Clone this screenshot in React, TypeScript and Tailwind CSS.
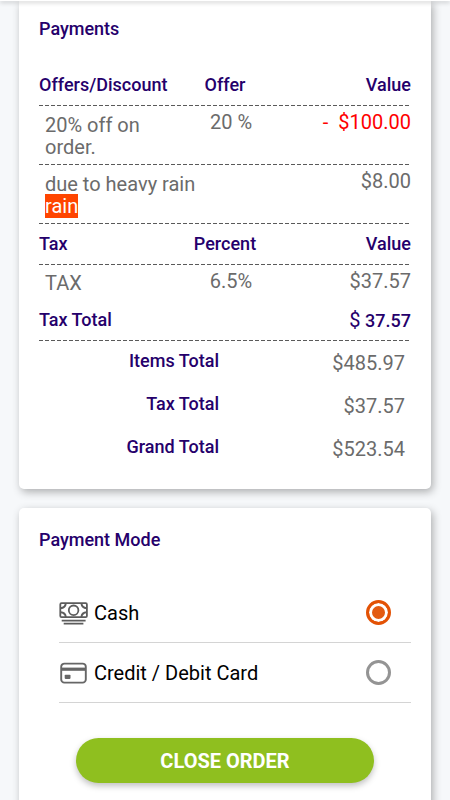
import { useState } from 'react'

const dashed = 'bg-[repeating-linear-gradient(to_right,#5a5a5a_0_4px,transparent_4px_6px)] bg-[length:100%_1px] bg-bottom bg-no-repeat'
const card = 'mx-[19px] rounded-[5px] bg-white px-5 shadow-[2px_3px_9px_rgba(0,0,0,0.3)]'
const heading = 'text-lg leading-6 font-medium text-[#25006b]'

function HeadRow({ cells }: { cells: string[] }) {
  return (
    <tr className={dashed}>
      <th className="w-1/3 pt-2 pb-[9px] text-left font-medium">{cells[0]}</th>
      <th className="w-1/3 pt-2 pb-[9px] text-center font-medium">{cells[1]}</th>
      <th className="w-1/3 pt-2 pb-[9px] text-right font-medium">{cells[2]}</th>
    </tr>
  )
}

function CashIcon() {
  return (
    <svg viewBox="0 0 30 26" className="h-[26px] w-[30px]" fill="none" stroke="#5c5c5c" aria-hidden="true">
      <rect x="1.3" y="3.2" width="26.6" height="14" rx="1.2" strokeWidth="1.8" />
      <circle cx="14.6" cy="10.3" r="4.8" strokeWidth="1.8" />
      <path d="M1.5 8.2Q6.4 7.8 6.8 3.4M27.7 8.2Q22.8 7.8 22.4 3.4M1.5 12.3Q6.4 12.7 6.8 17M27.7 12.3Q22.8 12.7 22.4 17" strokeWidth="1.9" />
      <path d="M2.7 20.6H26.6M4.7 23.6H24.4" strokeWidth="1.8" />
    </svg>
  )
}

function CardIcon() {
  return (
    <svg viewBox="0 0 30 26" className="h-[26px] w-[30px]" fill="none" stroke="#666" aria-hidden="true">
      <rect x="2.2" y="3.6" width="24.6" height="19" rx="3.2" strokeWidth="1.9" />
      <path d="M3 9.2H26.5" strokeWidth="3.2" />
      <rect x="5.7" y="14.7" width="5.8" height="4.2" rx="0.8" fill="#666" stroke="none" />
    </svg>
  )
}

const modes = [
  { id: 'cash', label: 'Cash', Icon: CashIcon },
  { id: 'card', label: 'Credit / Debit Card', Icon: CardIcon },
]

const totals = [
  ['Items Total', '$485.97'],
  ['Tax Total', '$37.57'],
  ['Grand Total', '$523.54'],
]

export default function App() {
  const [mode, setMode] = useState('cash')

  return (
    <div className="min-h-screen bg-[#f6f8fa] font-[Roboto,sans-serif] text-xl leading-[22px] text-[#6b6b6b]">
      <header className="relative h-px bg-white shadow-[0_1px_4px_rgba(0,0,0,0.5)]" />
      <main>
        <section className={`${card} rounded-t-none pt-4 pb-[19px]`}>
          <h2 className={heading}>Payments</h2>
          <table className="mt-6 w-full table-fixed border-collapse">
            <thead className={heading}>
              <HeadRow cells={['Offers/Discount', 'Offer', 'Value']} />
            </thead>
            <tbody className="align-top">
              <tr className={dashed}>
                <td className="pt-2 pb-[7px] pl-[6px]">20% off on order.</td>
                <td className="pt-[5px] pl-3 text-center">20 %</td>
                <td className="pt-[5px] text-right whitespace-pre text-[#f00]">-  $100.00</td>
              </tr>
              <tr className={dashed}>
                <td colSpan={2} className="pt-2 pb-[7px] pl-[6px]">
                  due to heavy rain<br />
                  <span className="bg-[#ff4500] text-white">rain</span>
                </td>
                <td className="pt-[5px] text-right">$8.00</td>
              </tr>
            </tbody>
            <tbody className={heading}>
              <HeadRow cells={['Tax', 'Percent', 'Value']} />
            </tbody>
            <tbody className="align-top">
              <tr>
                <td className="pt-[7px] pb-[10px] pl-[6px]">TAX</td>
                <td className="pt-[5px] pl-3 text-center">6.5%</td>
                <td className="pt-[5px] text-right">$37.57</td>
              </tr>
              <tr className={`${dashed} ${heading}`}>
                <th colSpan={2} className="pt-1 pb-[9px] text-left font-medium">Tax Total</th>
                <td className="pt-1 text-right"><span className="text-xl leading-6 font-normal">$</span> 37.57</td>
              </tr>
            </tbody>
          </table>
          <dl>
            {totals.map(([name, value]) => (
              <div key={name} className="flex justify-between pt-2 pb-[10px]">
                <dt className={`${heading} w-[180px] text-right`}>{name}</dt>
                <dd className="pt-[3px] pr-[6px]">{value}</dd>
              </div>
            ))}
          </dl>
        </section>

        <section className={`${card} mt-[19px] pt-5 pb-10`}>
          <h2 className={heading}>Payment Mode</h2>
          <div className="mt-[31px] ml-5 text-black">
            {modes.map(({ id, label, Icon }) => (
              <label key={id} className="flex h-15 items-center border-b border-[#d4d4d4] pr-5">
                <Icon />
                <span className="ml-[5px] flex-1">{label}</span>
                <input
                  type="radio"
                  name="mode"
                  value={id}
                  checked={mode === id}
                  onChange={() => setMode(id)}
                  className="size-[25px] appearance-none rounded-full border-3 border-[#949494] checked:border-[#e35205] checked:bg-[#e35b12] checked:shadow-[inset_0_0_0_3px_#fff]"
                />
              </label>
            ))}
          </div>
          <button type="button" className="mx-auto mt-[35px] block h-[45px] w-4/5 rounded-full bg-[#8fbf1f] font-bold text-white shadow-[0_3px_6px_rgba(0,0,0,0.25)]">
            CLOSE ORDER
          </button>
        </section>
      </main>
    </div>
  )
}
